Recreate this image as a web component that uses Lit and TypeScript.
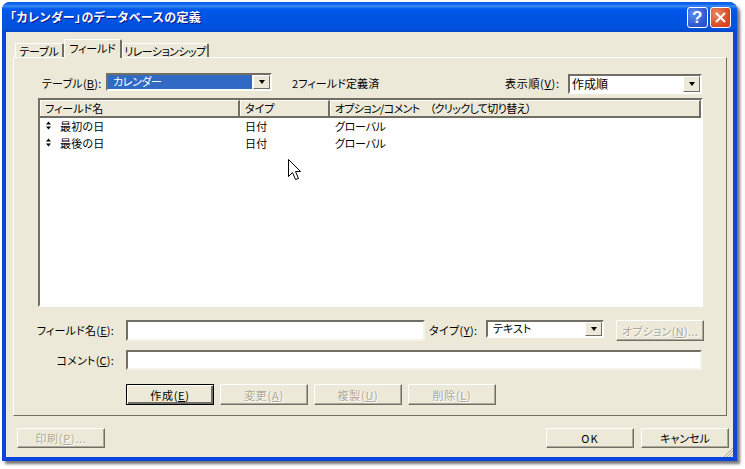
import { LitElement, html, css } from "lit";
import { customElement } from "lit/decorators.js";

@customElement("app-root")
export class AppRoot extends LitElement {
  static styles = css`
    :host { display: block; width: 745px; height: 469px; background: #fff; padding: 2px 0 0 2px; box-sizing: border-box;
      font: 11px/14px "Noto Sans CJK JP", "Noto Sans", sans-serif; font-feature-settings: "palt"; color: #000; position: relative; white-space: nowrap; }
    u { text-underline-offset: 1px; }
    .window { width: 735px; height: 459px; box-sizing: border-box; display: flex; flex-direction: column;
      background: #0a45dc; border-radius: 8px 8px 0 0; box-shadow: 3px 3px 3px rgba(0,0,0,.55); }
    .title { height: 30px; flex: none; display: flex; align-items: center; padding: 0 6px 0 8px; border-radius: 8px 8px 0 0;
      background: linear-gradient(#0a5fe8 0, #0a60ee 2px, #3f8cf3 4px, #0058ee 7px, #0054e3 15px, #0052de 26px, #0148c8 30px);
      color: #fff; font-weight: 700; font-size: 12px; letter-spacing: .42px; text-shadow: 1px 1px #0f1089; }
    .title span { flex: 1; }
    .tb { width: 21px; height: 21px; box-sizing: border-box; border: 1px solid #fff; border-radius: 3px; margin-left: 2px;
      display: flex; align-items: center; justify-content: center; }
    .help { background: radial-gradient(circle at 30% 30%, #5c8cf0, #2a55d0 70%); font: 700 17px/19px "Liberation Sans", sans-serif; text-shadow: none; }
    .close { background: radial-gradient(circle at 30% 30%, #e88a68, #d8451f 70%); }
    .body { flex: 1; margin: 0 4px 4px; background: #ece9d8; padding: 8px 6px 0 7px; display: flex; flex-direction: column; }
    .tabs { display: flex; align-items: flex-end; height: 18px; padding-left: 2px; margin-bottom: -1px; }
    .tab { height: 15px; box-sizing: border-box; border: 1px solid #fff; border-right: 2px solid #716f64; border-bottom: 0; line-height: 12px;
      border-radius: 2px 2px 0 0; display: flex; align-items: center; justify-content: center; letter-spacing: -.2px; background: #ece9d8; }
    .tab.on { height: 19px; z-index: 1; position: relative; padding-bottom: 3px; }
    .tab.w1 { width: 49px; } .tab.w2 { width: 58px; } .tab.w3 { width: 87px; letter-spacing: -.55px; }
    .panel { height: 359px; box-sizing: border-box; border: 1px solid; border-color: #fff #716f64 #716f64 #fff;
      padding-top: 15px; display: flex; flex-direction: column; }
    .row { display: flex; align-items: center; flex: none; }
    .r1 { height: 20px; padding-left: 28px; align-items: flex-start; line-height: 20px; }
    .r1 .sel { height: 18px; }
    .r1 .sel.big { height: 20px; margin-top: 1px; }
    .l1 { width: 64px; letter-spacing: .2px; } .l2 { width: 63px; letter-spacing: .7px; }
    .s1 { width: 166px; } .s2 { width: 134px; } .s3 { width: 118px; height: 18px; }
    .count { margin: 0 0 0 20px; width: 213px; letter-spacing: .1px; }
    .list { width: 665px; height: 209px; box-sizing: border-box; margin: 5px 0 0 24px; flex: none; background: #fff;
      border: 2px solid; border-color: #716f64 #fff #fff #716f64; display: flex; flex-direction: column; }
    .head { display: flex; height: 18px; flex: none; background: #ece9d8; box-sizing: border-box; border-bottom: 2px solid #716f64; }
    .head div { box-sizing: border-box; padding-left: 4px; line-height: 15px; border-left: 1px solid #fff; border-right: 2px solid #716f64; border-top: 1px solid #fff; }
    .head .c3 { letter-spacing: -.65px; }
    .c1 { width: 200px; } .c2 { width: 90px; } .c3 { flex: 1; }
    .rows { margin-top: -1px; }
    .item { display: flex; height: 17px; align-items: center; }
    .item div { box-sizing: border-box; padding-left: 5px; }
    .item .c1 { display: flex; align-items: center; gap: 8px; padding-left: 5px; letter-spacing: .2px; }
    .item .c2 { letter-spacing: .2px; }
    .item .c3 { letter-spacing: -.3px; }
    .sel { display: flex; box-sizing: border-box; background: #fff; border: 2px solid; border-color: #716f64 #fff #fff #716f64; align-items: stretch; }
    .val { flex: 1; padding: 0 2px; line-height: 13px; }
    .big .val { font-size: 12px; line-height: 15px; }
    .val.hi { background: #316ac5; color: #fff; padding-left: 5px; margin-right: 1px; letter-spacing: -.4px; }
    .val.pad { padding-left: 5px; }
    .drop { width: 17px; box-sizing: border-box; background: #ece9d8; border: 1px solid; border-color: #fff #716f64 #716f64 #fff; display: flex; align-items: center; justify-content: center; }
    .drop i { display: block; width: 0; height: 0; border: 3px solid transparent; border-top: 4px solid #000; border-bottom: 0; }
    .label { width: 112px; text-align: right; flex: none; padding-right: 12px; box-sizing: border-box; letter-spacing: .2px; }
    .input { box-sizing: border-box; height: 21px; background: #fff; border: 2px solid; border-color: #716f64 #f5f3ea #f5f3ea #716f64; }
    .i1 { width: 299px; } .i2 { width: 576px; height: 20px; }
    .r3 { margin-top: 13px; height: 21px; align-items: flex-start; }
    .r3 .label, .r3 .tl { line-height: 20px; }
    .tl { width: 57px; margin-left: 4px; flex: none; letter-spacing: .4px; }
    .r4 { margin-top: 9px; height: 20px; }
    .r5 { margin-top: 14px; padding-left: 112px; gap: 6px; }
    .btn { width: 88px; height: 21px; box-sizing: border-box; display: flex; align-items: center; justify-content: center; flex: none; background: #ece9d8;
      border: 1px solid; border-color: #fff #716f64 #716f64 #fff; box-shadow: inset -1px -1px #aca899; letter-spacing: .7px; }
    .btn.def { border-color: #000; box-shadow: inset 1px 1px #fff, inset -2px -2px #716f64; }
    .btn.off { color: #aca899; text-shadow: 1px 1px #fff; }
    .opt { margin-left: 12px; letter-spacing: .3px; }
    .ok { letter-spacing: 1px; }
    .cancel { margin-left: 7px; letter-spacing: 0; }
    .foot { display: flex; margin: 12px -2px 0 0; padding-left: 4px; }
    .foot .btn { height: 20px; }
    .grow { flex: 1; }
    .cursor { position: absolute; left: 288px; top: 159px; }
    .grip { position: absolute; left: 723px; top: 447px; }
  `;

  private bullet() {
    return html`<svg width="7" height="9" viewBox="0 0 7 9"><path d="M3.5 .5 6 3.5H1ZM1 5.5h5L3.5 8.5Z" fill="#000"/></svg>`;
  }

  render() {
    return html`
      <div class="window">
        <div class="title">
          <span>「カレンダー」のデータベースの定義</span>
          <div class="tb help">?</div>
          <div class="tb close"><svg width="13" height="13" viewBox="0 0 13 13"><path d="M2 2l9 9M11 2l-9 9" stroke="#fff" stroke-width="2"/></svg></div>
        </div>
        <div class="body">
          <div class="tabs">
            <div class="tab w1">テーブル</div>
            <div class="tab on w2">フィールド</div>
            <div class="tab w3">リレーションシップ</div>
          </div>
          <div class="panel">
            <div class="row r1">
              <div class="l1">テーブル(<u>B</u>):</div>
              <div class="sel s1"><div class="val hi">カレンダー</div><div class="drop"><i></i></div></div>
              <div class="count">2フィールド定義済</div>
              <div class="l2">表示順(<u>V</u>):</div>
              <div class="sel s2 big"><div class="val">作成順</div><div class="drop"><i></i></div></div>
            </div>
            <div class="list">
              <div class="head"><div class="c1">フィールド名</div><div class="c2">タイプ</div><div class="c3">オプション/コメント　（クリックして切り替え）</div></div>
              <div class="rows">
                <div class="item"><div class="c1">${this.bullet()}<span>最初の日</span></div><div class="c2">日付</div><div class="c3">グローバル</div></div>
                <div class="item"><div class="c1">${this.bullet()}<span>最後の日</span></div><div class="c2">日付</div><div class="c3">グローバル</div></div>
              </div>
            </div>
            <div class="row r3">
              <div class="label">フィールド名(<u>E</u>):</div>
              <div class="input i1"></div>
              <div class="tl">タイプ(<u>Y</u>):</div>
              <div class="sel s3"><div class="val pad">テキスト</div><div class="drop"><i></i></div></div>
              <div class="btn off opt">オプション(<u>N</u>)...</div>
            </div>
            <div class="row r4">
              <div class="label">コメント(<u>C</u>):</div>
              <div class="input i2"></div>
            </div>
            <div class="row r5">
              <div class="btn def">作成(<u>E</u>)</div>
              <div class="btn off">変更(<u>A</u>)</div>
              <div class="btn off">複製(<u>U</u>)</div>
              <div class="btn off">削除(<u>L</u>)</div>
            </div>
          </div>
          <div class="foot">
            <div class="btn off">印刷(<u>P</u>)...</div>
            <div class="grow"></div>
            <div class="btn ok">OK</div>
            <div class="btn cancel">キャンセル</div>
          </div>
        </div>
      </div>
      <svg class="cursor" width="13" height="22" viewBox="0 0 13 22"><path d="M.5.5v17l4-4 3 7 3-1-3-7h5Z" fill="#fff" stroke="#000"/></svg>
      <svg class="grip" width="11" height="11" viewBox="0 0 11 11"><path d="M10 1 1 10M10 4 4 10M10 7 7 10" stroke="#aca899" stroke-width="1"/></svg>
    `;
  }
}
